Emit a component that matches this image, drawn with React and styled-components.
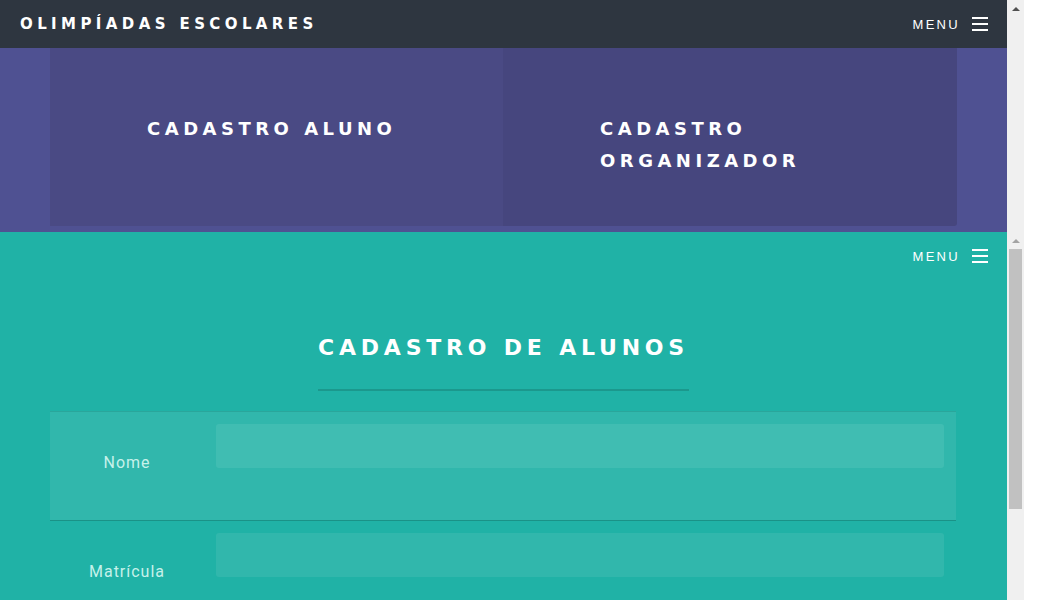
import React from 'react';
import styled, { createGlobalStyle } from 'styled-components';

const HEAVY = `"DejaVu Sans", "Liberation Sans", Arial, sans-serif`;

const GlobalStyle = createGlobalStyle`
    html, body {
        margin: 0;
        padding: 0;
        height: 100%;
        overflow: hidden;
        background: #fff;
    }
    body {
        font-family: "Liberation Sans", Arial, sans-serif;
    }
`;

// 1. Wrapper
const Screen = styled.div`
    display: flex;
    width: 1042px;
    height: 600px;
    overflow: hidden;
`;

const Page = styled.div`
    flex: none;
    width: 1007px;
    display: flex;
    flex-direction: column;
`;

// 2. Navbar
const NavBar = styled.header`
    flex: none;
    height: 48px;
    display: flex;
    align-items: center;
    justify-content: space-between;
    padding: 0 19px 0 20px;
    background: ${(props) => props.bg || 'transparent'};
`;

const Brand = styled.h1`
    margin: 0;
    font-family: ${HEAVY};
    font-weight: bold;
    font-size: 15px;
    letter-spacing: 4.4px;
    color: #fff;
`;

const MenuToggle = styled.div`
    display: flex;
    align-items: center;
    gap: 12px;
    margin-left: auto;
    font-size: 13px;
    letter-spacing: 2.3px;
    color: #fff;
`;

const Burger = styled.span`
    display: flex;
    flex-direction: column;
    gap: 4px;
    width: 16px;

    i {
        display: block;
        height: 2px;
        background: #fff;
    }
`;

// 3. Choice section
const ChoiceSection = styled.section`
    flex: none;
    background: #4f5192;
    padding: 0 50px 6px;
`;

const ChoiceGrid = styled.div`
    display: grid;
    grid-template-columns: 453px 454px;
`;

const ChoiceCard = styled.a`
    display: block;
    padding: 65px 97px 49px;
    background: ${(props) => (props.dark ? '#46467e' : '#4a4a84')};
    border-radius: ${(props) => (props.dark ? '0 0 3px 0' : '0')};
    font-family: ${HEAVY};
    font-weight: bold;
    font-size: 18px;
    line-height: 32px;
    letter-spacing: 4.5px;
    color: #fff;
    text-decoration: none;
`;

// 4. Form section
const FormSection = styled.section`
    flex: 1;
    background: #20b2a6;
`;

const TitleWrap = styled.div`
    text-align: center;
    padding-top: 57px;
`;

const Title = styled.h2`
    display: inline-block;
    margin: 0;
    padding: 0 0 30px;
    font-family: ${HEAVY};
    font-weight: bold;
    font-size: 22px;
    line-height: 22px;
    letter-spacing: 4.8px;
    color: #fff;
    border-bottom: 2px solid #1b988d;
`;

const FieldList = styled.div`
    margin: 20px 51px 0 50px;
`;

const FieldRow = styled.div`
    display: flex;
    gap: 12px;
    padding: 12px 12px 47px 0;
    background: ${(props) => (props.active ? '#31b7ac' : 'transparent')};
    border-top: ${(props) => (props.active ? '1px solid #2aa69b' : 'none')};
    border-bottom: 1px solid ${(props) => (props.active ? '#1a9287' : 'transparent')};
`;

const FieldLabel = styled.label`
    flex: none;
    width: 154px;
    padding-top: 29px;
    text-align: center;
    font-family: Roboto, "Liberation Sans", sans-serif;
    font-size: 16px;
    line-height: 20px;
    letter-spacing: 1px;
    color: #c6f1ea;
`;

const FieldInput = styled.input`
    flex: 1;
    height: 44px;
    box-sizing: border-box;
    border: none;
    border-radius: 3px;
    outline: none;
    background: ${(props) => (props.active ? '#40bdb2' : '#31b7ac')};
`;

// 5. Fake browser scrollbar
const Track = styled.div`
    flex: none;
    width: 17px;
    background: #f0f0f0;
    display: flex;
    flex-direction: column;
`;

const TrackTop = styled.div`
    flex: none;
    height: 232px;
`;

const ArrowButton = styled.div`
    height: 17px;
    display: flex;
    align-items: center;
    justify-content: center;

    &::before {
        content: '';
        border-left: 4px solid transparent;
        border-right: 4px solid transparent;
        border-bottom: 4px solid ${(props) => props.color};
    }
`;

const Thumb = styled.div`
    height: 260px;
    margin: 0 2px;
    background: #c1c1c1;
`;

const fields = [
    { label: 'Nome', active: true },
    { label: 'Matrícula' },
];

const Menu = () => (
    <MenuToggle>
        MENU
        <Burger>
            <i />
            <i />
            <i />
        </Burger>
    </MenuToggle>
);

const App = () => {
    return (
        <Screen>
            <GlobalStyle />
            <Page>
                <NavBar bg="#2e3640">
                    <Brand>OLIMPÍADAS ESCOLARES</Brand>
                    <Menu />
                </NavBar>

                <ChoiceSection>
                    <ChoiceGrid>
                        <ChoiceCard href="#aluno">CADASTRO ALUNO</ChoiceCard>
                        <ChoiceCard href="#organizador" dark>
                            CADASTRO ORGANIZADOR
                        </ChoiceCard>
                    </ChoiceGrid>
                </ChoiceSection>

                <FormSection>
                    <NavBar>
                        <Menu />
                    </NavBar>
                    <TitleWrap>
                        <Title>CADASTRO DE ALUNOS</Title>
                    </TitleWrap>
                    <FieldList>
                        {fields.map((f) => (
                            <FieldRow key={f.label} active={f.active}>
                                <FieldLabel>{f.label}</FieldLabel>
                                <FieldInput active={f.active} />
                            </FieldRow>
                        ))}
                    </FieldList>
                </FormSection>
            </Page>

            <Track>
                <TrackTop>
                    <ArrowButton color="#505050" />
                </TrackTop>
                <ArrowButton color="#a3a3a3" />
                <Thumb />
            </Track>
        </Screen>
    );
};

export default App;
